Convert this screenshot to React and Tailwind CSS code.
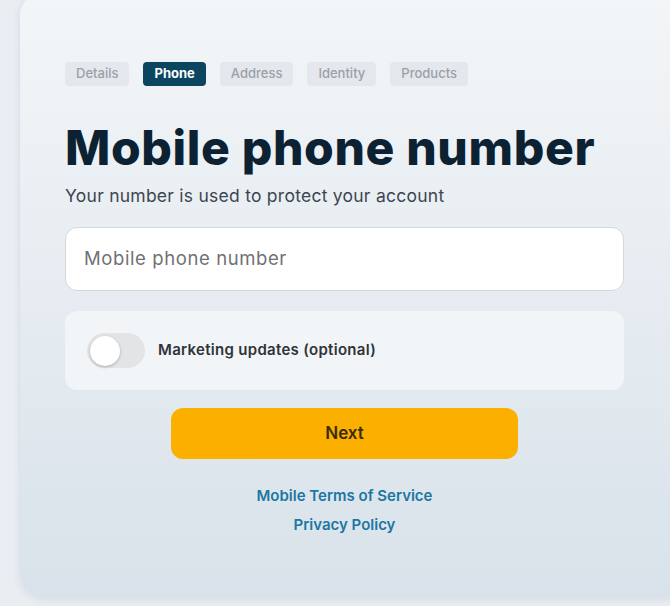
export default function App() {
  const steps = [
    { label: "Details", active: false },
    { label: "Phone", active: true },
    { label: "Address", active: false },
    { label: "Identity", active: false },
    { label: "Products", active: false },
  ];

  return (
    <div
      className="h-[606px] w-[670px] overflow-hidden bg-[#e9eef3] pl-[20px]"
      style={{ fontFamily: "Inter, 'Noto Sans', sans-serif" }}
    >
      <div className="mt-[-8px] h-[605px] w-[700px] rounded-[24px] bg-gradient-to-b from-[#f3f6f8] to-[#d9e2ea] pl-[45px] pt-[70px] shadow-[0_2px_8px_rgba(60,80,100,0.12)]">
        <div className="w-[559px]">
          {/* step indicator */}
          <div className="flex gap-[14px]">
            {steps.map((s) => (
              <div
                key={s.label}
                className={
                  s.active
                    ? "flex h-[24px] items-center rounded-[4px] bg-[#0b4560] px-[11px] text-[13px] font-bold text-white"
                    : "flex h-[24px] items-center rounded-[4px] bg-[#e4e8ec] px-[11px] text-[13px] font-medium text-[#9aa1a8]"
                }
              >
                {s.label}
              </div>
            ))}
          </div>

          <h1 className="mt-[32px] whitespace-nowrap text-[48px] font-extrabold leading-[60px] tracking-[0.65px] text-[#0c2233]">
            Mobile phone number
          </h1>

          <p className="mt-[6px] text-[17.5px] leading-[24px] tracking-[0.25px] text-[#3d4650]">
            Your number is used to protect your account
          </p>

          <div className="mt-[19px] flex h-[64px] items-center rounded-[12px] border border-[#d3d8dc] bg-white px-[18px] text-[18.5px] tracking-[0.6px] text-[#6f7173]">
            Mobile phone number
          </div>

          <div className="mt-[20px] flex h-[79px] items-center gap-[13px] rounded-[12px] bg-[#f2f5f7] px-[22px]">
            <div className="flex h-[35px] w-[58px] items-center rounded-full bg-[#e3e4e6] p-[3px]">
              <div className="h-[30px] w-[30px] rounded-full bg-white shadow-[0_1px_3px_rgba(0,0,0,0.25)]" />
            </div>
            <span className="text-[15px] font-semibold tracking-[0.3px] text-[#2f3337]">
              Marketing updates (optional)
            </span>
          </div>

          <div className="mt-[18px] flex justify-center">
            <button className="flex h-[51px] w-[347px] items-center justify-center rounded-[12px] bg-[#fbb000] text-[17px] font-semibold text-[#3a2c0a]">
              Next
            </button>
          </div>

          <div className="mt-[27px] flex flex-col items-center gap-[9px] text-[15px] font-semibold text-[#1b77a3]">
            <span className="leading-[20px]">Mobile Terms of Service</span>
            <span className="leading-[20px]">Privacy Policy</span>
          </div>
        </div>
      </div>
    </div>
  );
}
